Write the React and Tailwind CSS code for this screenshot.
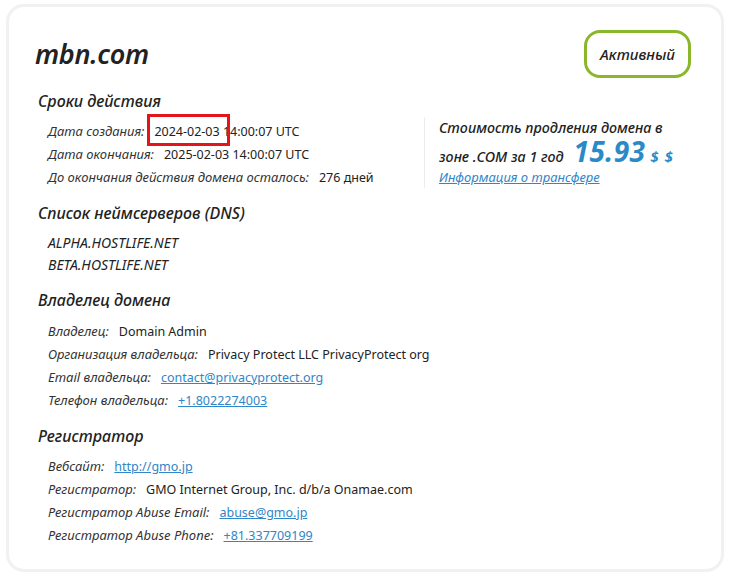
import React from "react";

const font = { fontFamily: '"Noto Sans", "Open Sans", sans-serif' };

function Row({ label, children }) {
  return (
    <div className="flex items-baseline h-[23px] leading-[23px]">
      <span className="italic text-[13px] text-[#333]">{label}</span>
      <span className="ml-[10px] text-[12.5px] text-[#222]">{children}</span>
    </div>
  );
}

function Link({ children }) {
  return <a href="#" className="text-[#2f86c8] underline">{children}</a>;
}

function Heading({ children, className = "" }) {
  return (
    <h2 className={"ml-[3px] italic font-medium text-[16px] leading-[22px] h-[22px] text-[#222] " + className}>
      {children}
    </h2>
  );
}

export default function App() {
  return (
    <div className="w-[731px] h-[577px] bg-white pt-[4px] pl-[6px]" style={font}>
      <div className="w-[718px] h-[568px] rounded-[18px] border-[3px] border-[#f1f1f1] bg-white pl-[26px] pr-[30px] pt-[23px]">
        {/* Header */}
        <div className="flex items-center justify-between h-[48px]">
          <h1 className="italic font-semibold text-[27px] leading-[34px] text-[#222] tracking-[-0.3px]">mbn.com</h1>
          <div className="w-[107px] h-[48px] rounded-[16px] border-[3px] border-[#8ab72a] flex items-center justify-center italic font-medium text-[15px] text-[#222]">
            Активный
          </div>
        </div>

        {/* Сроки действия */}
        <Heading className="mt-[12px]">Сроки действия</Heading>
        <div className="flex mt-[8px]">
          <div className="w-[389px] pl-[13px]">
            <div className="relative">
              <Row label="Дата создания:">2024-02-03 14:00:07 UTC</Row>
              <div className="absolute left-[99px] top-[-6px] w-[83px] h-[32px] border-[3px] border-[#e3141b]"></div>
            </div>
            <Row label="Дата окончания:">2025-02-03 14:00:07 UTC</Row>
            <Row label="До окончания действия домена осталось:">276 дней</Row>
          </div>
          <div className="-mt-[3px] h-[71px] border-l border-[#ececec] pl-[14px]">
            <div className="h-[22px] italic font-medium text-[14.3px] leading-[22px] text-[#222]">
              Стоимость продления домена в
            </div>
            <div className="flex items-baseline h-[28px] italic font-medium text-[14.3px] text-[#222] leading-[28px]">
              зоне .COM за 1 год
              <span className="ml-[10px] text-[28px] font-bold text-[#2a8ac8] leading-[24px] tracking-[0.4px]">15.93</span>
              <span className="ml-[5px] text-[15px] font-bold text-[#2a8ac8] tracking-[1px]">$ $</span>
            </div>
            <a href="#" className="block h-[20px] italic text-[13px] text-[#2f86c8] underline leading-[20px]">
              Информация о трансфере
            </a>
          </div>
        </div>

        {/* DNS */}
        <Heading className="mt-[13px]">Список неймсерверов (DNS)</Heading>
        <div className="pl-[13px] mt-[8px] italic text-[14px] text-[#222]">
          <div className="h-[22px] leading-[22px]">ALPHA.HOSTLIFE.NET</div>
          <div className="h-[22px] leading-[22px]">BETA.HOSTLIFE.NET</div>
        </div>

        {/* Владелец */}
        <Heading className="mt-[13px]">Владелец домена</Heading>
        <div className="pl-[13px] mt-[9px]">
          <Row label="Владелец:">Domain Admin</Row>
          <Row label="Организация владельца:">Privacy Protect LLC PrivacyProtect org</Row>
          <Row label="Email владельца:"><Link>contact@privacyprotect.org</Link></Row>
          <Row label="Телефон владельца:"><Link>+1.8022274003</Link></Row>
        </div>

        {/* Регистратор */}
        <Heading className="mt-[13px]">Регистратор</Heading>
        <div className="pl-[13px] mt-[8px]">
          <Row label="Вебсайт:"><Link>http://gmo.jp</Link></Row>
          <Row label="Регистратор:">GMO Internet Group, Inc. d/b/a Onamae.com</Row>
          <Row label="Регистратор Abuse Email:"><Link>abuse@gmo.jp</Link></Row>
          <Row label="Регистратор Abuse Phone:"><Link>+81.337709199</Link></Row>
        </div>
      </div>
    </div>
  );
}
